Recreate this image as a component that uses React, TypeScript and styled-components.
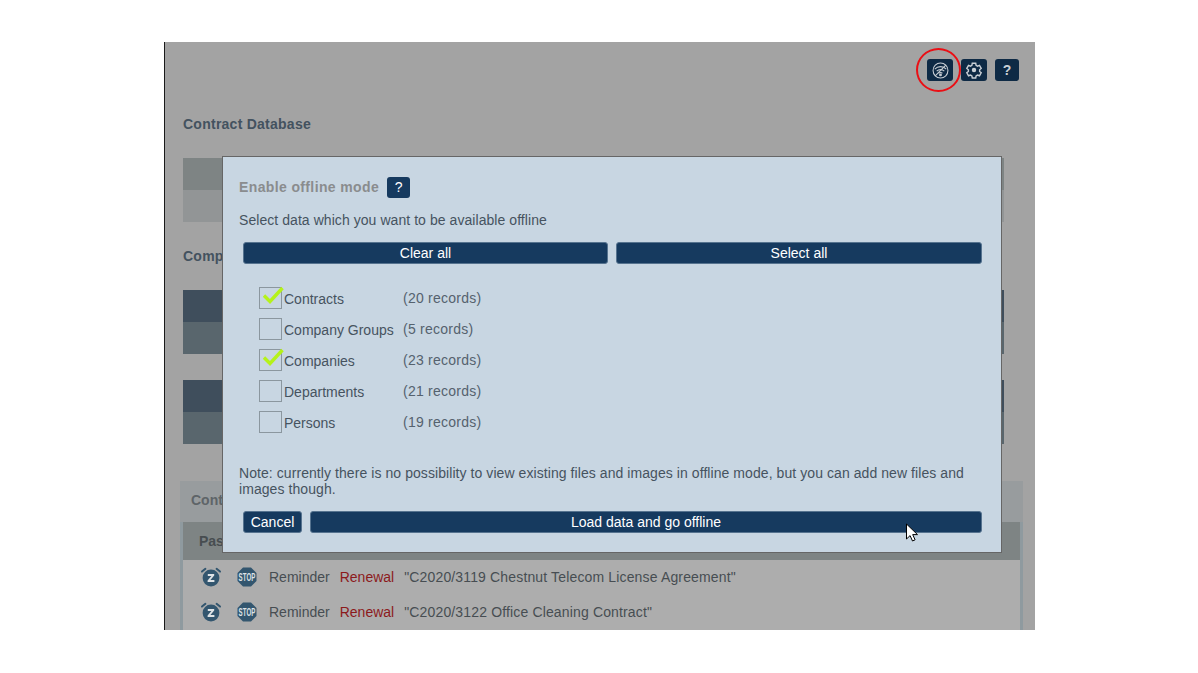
import styled, { createGlobalStyle } from 'styled-components';

const GlobalStyle = createGlobalStyle`
  html, body {
    margin: 0;
    background: #fff;
  }
  * {
    box-sizing: border-box;
  }
`;

// Page behind the dialog, colours are already dimmed by the overlay
const Frame = styled.div`
  position: relative;
  width: 871px;
  height: 588px;
  margin: 42px 0 0 164px;
  border-left: 1px solid #1a1a1a;
  background: #a3a3a3;
  overflow: hidden;
  font-family: 'Liberation Sans', Arial, sans-serif;
  font-size: 14px;
`;

const Toolbar = styled.div`
  display: flex;
  justify-content: flex-end;
  gap: 8px;
  height: 22px;
  margin: 17px 16px 0 0;
`;

const ToolButton = styled.div<{ $w: number }>`
  position: relative;
  display: flex;
  align-items: center;
  justify-content: center;
  width: ${(p) => p.$w}px;
  height: 22px;
  border-radius: 3px;
  background: #0e2a45;
  color: #c9cfd5;
  font-weight: bold;
  font-size: 14px;
`;

const RedRing = styled.div`
  position: absolute;
  left: -11px;
  top: -11px;
  width: 45px;
  height: 44px;
  border: 2.5px solid #ea0f15;
  border-radius: 50%;
`;

const Content = styled.div`
  padding: 0 31px 0 18px;
`;

const Heading = styled.h2<{ $top: number }>`
  margin: ${(p) => p.$top}px 0 0;
  height: 16px;
  line-height: 16px;
  font-size: 14px;
  font-weight: bold;
  letter-spacing: 0.25px;
  color: #43525f;
`;

const Block = styled.div<{ $top: number }>`
  margin-top: ${(p) => p.$top}px;
`;

const Band = styled.div<{ $c: string }>`
  height: 32px;
  background: ${(p) => p.$c};
`;

const BottomPanel = styled.section`
  position: absolute;
  left: 15px;
  right: 12px;
  top: 439px;
  bottom: 0;
  padding: 0 3px;
  background: #8f9a9f;
`;

const PanelTop = styled.div`
  height: 41px;
  margin: 0 -3px;
  padding: 11px 3px 0 3px;
  background: #989c9e;
  color: #5e6468;
  font-weight: bold;
  line-height: 16px;
  text-indent: 8px;
`;

const PastHeader = styled.div`
  height: 38px;
  padding-left: 16px;
  background: #7e8484;
  color: #474d50;
  font-weight: bold;
  line-height: 38px;
`;

const Rows = styled.div`
  height: 100px;
  background: #adadad;
`;

const Row = styled.div`
  display: flex;
  align-items: center;
  height: 35px;
  padding: 0 0 2px 17px;
  color: #474d52;
  letter-spacing: 0.15px;
`;

const RowIcon = styled.svg<{ $gap: number }>`
  flex: none;
  margin-right: ${(p) => p.$gap}px;
`;

const RowLabel = styled.span`
  margin: 0 10px 0 0;
  letter-spacing: 0;
`;

const Renewal = styled.span`
  margin-right: 10px;
  color: #8c1a1c;
  letter-spacing: 0;
`;

// Dialog
const Dialog = styled.div`
  position: absolute;
  left: 57px;
  top: 114px;
  display: flex;
  flex-direction: column;
  width: 780px;
  height: 397px;
  padding: 19px 19px 0 16px;
  border: 1px solid #666;
  background: #c8d6e2;
  color: #46535f;
`;

const TitleRow = styled.div`
  display: flex;
  align-items: center;
  gap: 8px;
  height: 22px;
`;

const Title = styled.h3`
  margin: 0;
  font-size: 14px;
  font-weight: bold;
  letter-spacing: 0.37px;
  color: #8a8c8e;
`;

const HelpButton = styled.div`
  display: flex;
  align-items: center;
  justify-content: center;
  width: 23px;
  height: 21px;
  border-radius: 3px;
  background: #163a5f;
  color: #fff;
  font-size: 14px;
`;

const Intro = styled.p`
  margin: 14px 0 0;
  line-height: 16px;
  letter-spacing: 0.06px;
`;

const ButtonRow = styled.div<{ $top: number }>`
  display: flex;
  gap: 8px;
  margin: ${(p) => p.$top}px 0 0 4px;
`;

const Btn = styled.div<{ $w?: number }>`
  ${(p) => (p.$w ? `flex: 0 0 ${p.$w}px;` : 'flex: 1;')}
  height: 22px;
  border: 1px solid #56738f;
  border-radius: 3px;
  background: #163a5f;
  color: #fff;
  text-align: center;
  line-height: 20px;
`;

const List = styled.div`
  display: grid;
  grid-template-columns: 23px 121px auto;
  grid-auto-rows: 31px;
  justify-content: start;
  align-items: center;
  margin: 18px 0 0 20px;
`;

const Check = styled.div`
  position: relative;
  width: 23px;
  height: 22px;
  border: 1px solid #8b979f;
`;

const Tick = styled.svg`
  position: absolute;
  left: 3px;
  top: -2px;
`;

const ItemLabel = styled.span`
  padding: 2px 0 0 2px;
  line-height: 16px;
`;

const Records = styled.span`
  line-height: 16px;
  letter-spacing: 0.25px;
  color: #55626e;
`;

const Note = styled.p`
  margin: 28px 0 0;
  line-height: 16px;
  letter-spacing: 0.07px;
`;

const Cursor = styled.svg`
  position: absolute;
  left: 682px;
  top: 366px;
`;

const AlarmIcon = () => (
  <RowIcon $gap={15} width="22" height="20" viewBox="0 0 22 20">
    <circle cx="11" cy="11" r="8.4" fill="#33566f" />
    <path d="M2 4.6 L5.4 1.8 M20 4.6 L16.6 1.8" stroke="#33566f" strokeWidth="2" strokeLinecap="round" />
    <path d="M7.8 7 H14.2 V8.6 L10.4 13 H14.4 V15 H7.6 V13.4 L11.4 9 H7.8 Z" fill="#dfe3e6" />
  </RowIcon>
);

const StopIcon = () => (
  <RowIcon $gap={12} width="20" height="20" viewBox="0 0 20 20">
    <path d="M6 0.5 H14 L19.5 6 V14 L14 19.5 H6 L0.5 14 V6 Z" fill="#33566f" />
    <text transform="translate(10 13.6) scale(0.68 1.15)" textAnchor="middle" fontFamily="Liberation Sans, sans-serif" fontSize="9" fontWeight="bold" fill="#dfe3e6">STOP</text>
  </RowIcon>
);

const items = [
  { name: 'Contracts', count: '(20 records)', on: true },
  { name: 'Company Groups', count: '(5 records)', on: false },
  { name: 'Companies', count: '(23 records)', on: true },
  { name: 'Departments', count: '(21 records)', on: false },
  { name: 'Persons', count: '(19 records)', on: false },
];

export default function App() {
  return (
    <>
      <GlobalStyle />
      <Frame>
        <Toolbar>
          <ToolButton $w={26}>
            <RedRing />
            <svg width="17" height="17" viewBox="0 0 16 16" fill="none" stroke="#c9cfd5" strokeWidth="1">
              <circle cx="8" cy="8" r="7" />
              <path d="M2.6 6.6 A7.6 7.6 0 0 1 13.4 6.6 M4.4 8.6 A5.2 5.2 0 0 1 11.6 8.6 M6.2 10.6 A2.8 2.8 0 0 1 9.8 10.6" />
              <circle cx="8" cy="12.2" r="0.8" fill="#c9cfd5" />
              <path d="M13 3 L3 13" />
            </svg>
          </ToolButton>
          <ToolButton $w={26}>
            <svg width="18" height="18" viewBox="0 0 24 24" fill="none" stroke="#c9cfd5" strokeWidth="1.9">
              <path d="M9.7 3h4.6l.5 2.7 1.9 1.1 2.6-.9 2.3 4-2.1 1.8v2.2l2.1 1.8-2.3 4-2.6-.9-1.9 1.1-.5 2.7H9.7l-.5-2.7-1.9-1.1-2.6.9-2.3-4 2.1-1.8v-2.2L2.4 9.9l2.3-4 2.6.9 1.9-1.1z" />
              <circle cx="12" cy="12" r="2" fill="#c9cfd5" />
            </svg>
          </ToolButton>
          <ToolButton $w={24}>?</ToolButton>
        </Toolbar>
        <Content>
          <Heading $top={35}>Contract Database</Heading>
          <Block $top={26}>
            <Band $c="#7e8484" />
            <Band $c="#929596" />
          </Block>
          <Heading $top={26}>Comp</Heading>
          <Block $top={26}>
            <Band $c="#3f4e5c" />
            <Band $c="#59666d" />
          </Block>
          <Block $top={26}>
            <Band $c="#3f4e5c" />
            <Band $c="#59666d" />
          </Block>
        </Content>
        <BottomPanel>
          <PanelTop>Cont</PanelTop>
          <PastHeader>Past</PastHeader>
          <Rows>
            <Row>
              <AlarmIcon />
              <StopIcon />
              <RowLabel>Reminder</RowLabel>
              <Renewal>Renewal</Renewal>
              "C2020/3119 Chestnut Telecom License Agreement"
            </Row>
            <Row>
              <AlarmIcon />
              <StopIcon />
              <RowLabel>Reminder</RowLabel>
              <Renewal>Renewal</Renewal>
              "C2020/3122 Office Cleaning Contract"
            </Row>
          </Rows>
        </BottomPanel>
        <Dialog>
          <TitleRow>
            <Title>Enable offline mode</Title>
            <HelpButton>?</HelpButton>
          </TitleRow>
          <Intro>Select data which you want to be available offline</Intro>
          <ButtonRow $top={14}>
            <Btn $w={365}>Clear all</Btn>
            <Btn>Select all</Btn>
          </ButtonRow>
          <List>
            {items.map((item) => (
              <Item key={item.name} {...item} />
            ))}
          </List>
          <Note>
            Note: currently there is no possibility to view existing files and images in offline mode, but you can add new files and
            images though.
          </Note>
          <ButtonRow $top={14}>
            <Btn $w={59}>Cancel</Btn>
            <Btn>Load data and go offline</Btn>
          </ButtonRow>
          <Cursor width="15" height="20" viewBox="0 0 14 20">
            <path d="M1 1 V16 L4.6 12.6 L7 18 L9.6 16.8 L7.2 11.6 H12 Z" fill="#fff" stroke="#000" strokeWidth="1" />
          </Cursor>
        </Dialog>
      </Frame>
    </>
  );
}

function Item({ name, count, on }: { name: string; count: string; on: boolean }) {
  return (
    <>
      <Check>
        {on && (
          <Tick width="22" height="18" viewBox="0 0 22 18">
            <path d="M1 9.5 L7 15.5 L19.5 2" fill="none" stroke="#b5f21a" strokeWidth="3.4" />
          </Tick>
        )}
      </Check>
      <ItemLabel>{name}</ItemLabel>
      <Records>{count}</Records>
    </>
  );
}
